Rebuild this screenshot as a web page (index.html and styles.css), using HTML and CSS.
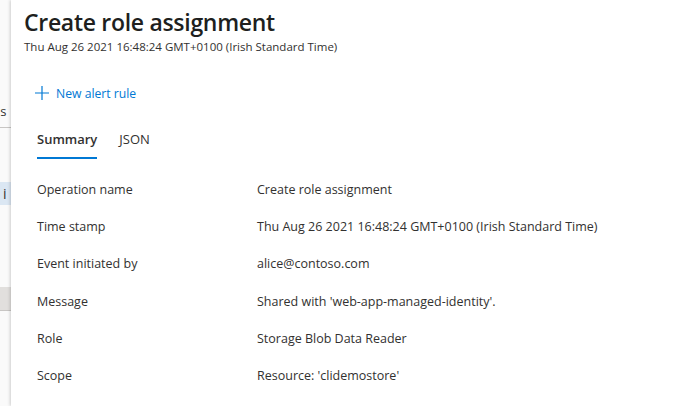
FILE: index.html
```html
<!DOCTYPE html>
<html lang="en">
<head>
<meta charset="utf-8">
<title>Create role assignment</title>
<link rel="stylesheet" href="styles.css">
</head>
<body>
<div class="page">
  <aside class="strip">
    <div class="strip-text">is</div>
    <div class="strip-line"></div>
    <div class="strip-sel">i</div>
    <div class="strip-gray"></div>
  </aside>
  <main class="panel">
    <header class="head">
      <h1 class="title">Create role assignment</h1>
      <div class="subtitle">Thu Aug 26 2021 16:48:24 GMT+0100 (Irish Standard Time)</div>
    </header>
    <div class="toolbar">
      <button class="cmd">
        <svg class="plus" width="16" height="16" viewBox="0 0 16 16"><path d="M8 1v14M1 8h14" stroke="#0078d4" stroke-width="1.2" fill="none"/></svg>
        <span>New alert rule</span>
      </button>
    </div>
    <nav class="tabs">
      <span class="tab active">Summary</span>
      <span class="tab">JSON</span>
    </nav>
    <dl class="props">
      <div class="row"><dt>Operation name</dt><dd>Create role assignment</dd></div>
      <div class="row"><dt>Time stamp</dt><dd>Thu Aug 26 2021 16:48:24 GMT+0100 (Irish Standard Time)</dd></div>
      <div class="row"><dt>Event initiated by</dt><dd>alice@contoso.com</dd></div>
      <div class="row"><dt>Message</dt><dd>Shared with 'web-app-managed-identity'.</dd></div>
      <div class="row"><dt>Role</dt><dd>Storage Blob Data Reader</dd></div>
      <div class="row"><dt>Scope</dt><dd>Resource: 'clidemostore'</dd></div>
    </dl>
  </main>
</div>
</body>
</html>
```
FILE: styles.css
```css
* { box-sizing: border-box; }
html, body { margin: 0; padding: 0; background: #fff; }
body {
  font-family: "Open Sans", "Noto Sans", sans-serif;
  color: #323130;
  width: 689px;
  height: 406px;
  overflow: hidden;
}
.page {
  display: flex;
  height: 406px;
}
.strip {
  width: 11px;
  flex: none;
  background: #fafafa;
  display: flex;
  flex-direction: column;
  overflow: hidden;
  font-size: 13px;
  color: #323130;
}
.strip-text {
  margin-top: 101px;
  height: 20px;
  line-height: 20px;
  margin-left: -3px;
}
.strip-line {
  margin-top: 6px;
  height: 1px;
  background: #c8c6c4;
}
.strip-sel {
  margin-top: 54px;
  height: 23px;
  line-height: 23px;
  background: #dbe7f3;
  padding-left: 3px;
  font-size: 14px;
}
.strip-gray {
  margin-top: 82px;
  height: 24px;
  background: #e1dfdd;
  border-bottom: 1px solid #c8c6c4;
}
.panel {
  flex: 1;
  background: #fff;
  box-shadow: -1px 0 3px rgba(0,0,0,0.18);
  padding-left: 13px;
}
.head { padding-top: 6px; }
.title {
  margin: 0;
  font-size: 23px;
  font-weight: 600;
  line-height: 32px;
  color: #201f1e;
  letter-spacing: -0.3px;
}
.subtitle {
  font-size: 11.5px;
  line-height: 16px;
  color: #323130;
  margin-top: 1px;
}
.toolbar {
  margin-top: 28px;
  padding-left: 10px;
}
.cmd {
  display: flex;
  align-items: center;
  gap: 6px;
  border: 0;
  background: none;
  padding: 0;
  font-family: inherit;
  font-size: 12.2px;
  color: #0078d4;
  height: 20px;
}
.plus { display: block; }
.tabs {
  display: flex;
  gap: 22px;
  margin-top: 26px;
  padding-left: 13px;
}
.tab {
  font-size: 13px;
  line-height: 20px;
  padding-bottom: 10px;
  color: #323130;
}
.tab.active {
  font-weight: 600;
  border-bottom: 2px solid #0078d4;
  padding-bottom: 8px;
}
.props {
  margin: 12px 0 0 0;
  padding-left: 13px;
}
.row {
  display: flex;
  height: 37.2px;
  align-items: center;
}
.row dt {
  width: 220px;
  font-size: 12.5px;
}
.row dd {
  margin: 0;
  font-size: 12.5px;
}
```
